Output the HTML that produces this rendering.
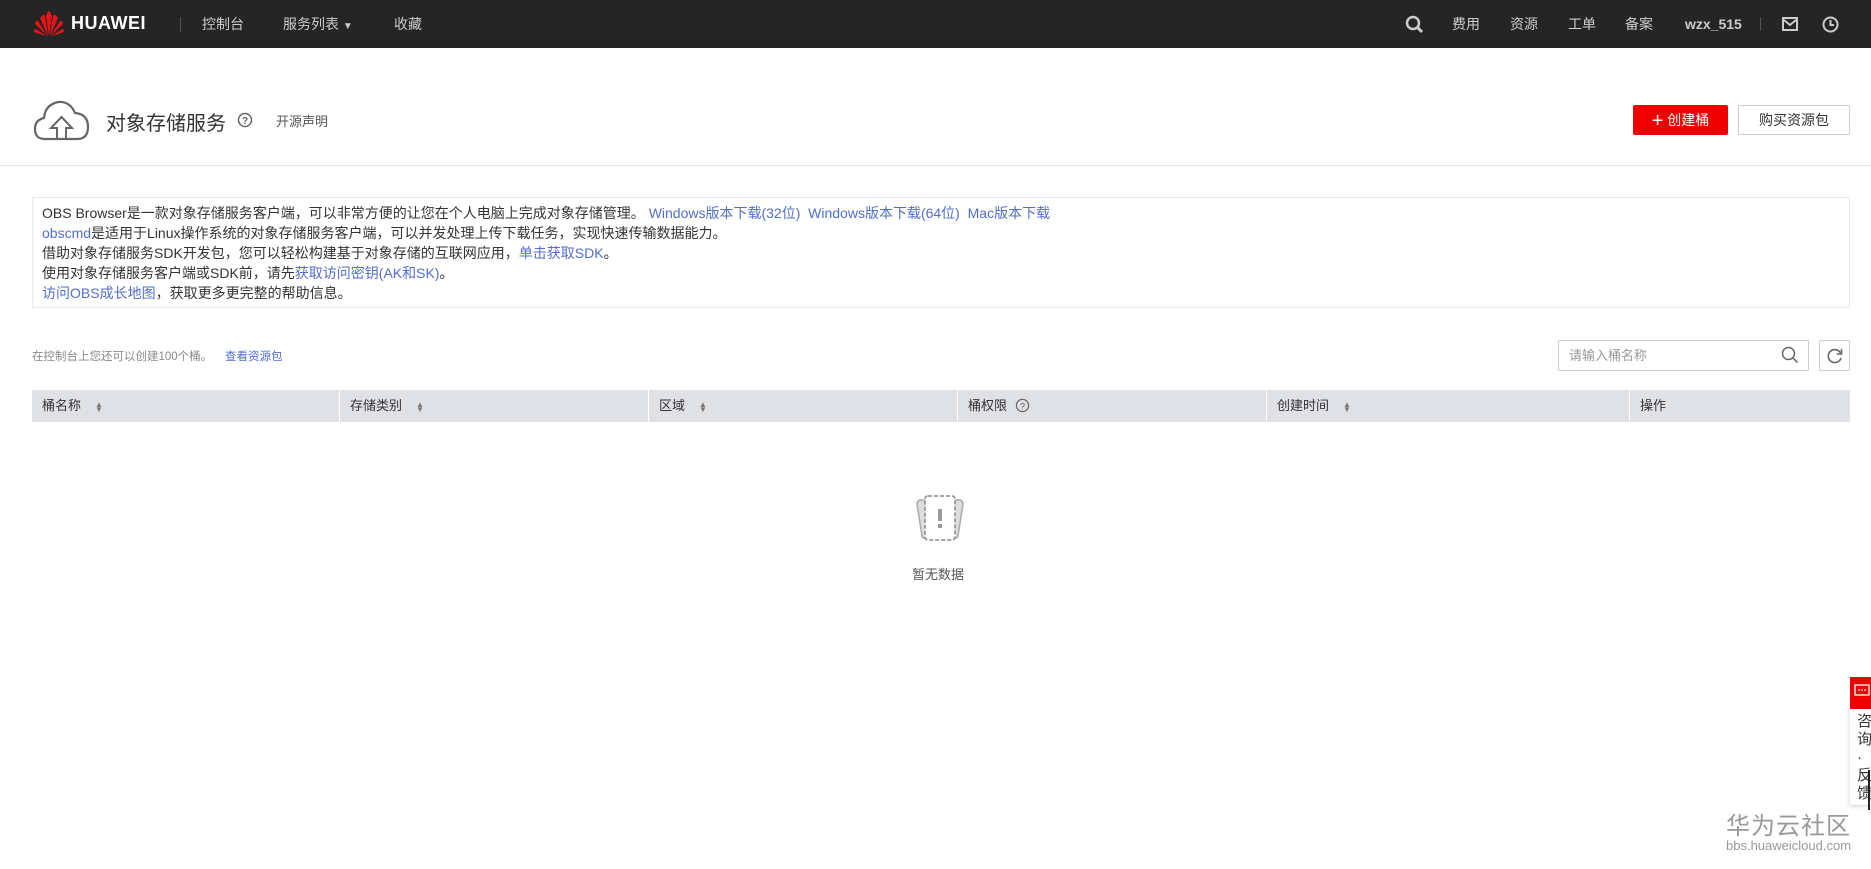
<!DOCTYPE html>
<html><head><meta charset="utf-8">
<style>
*{margin:0;padding:0;box-sizing:border-box}
body{width:1871px;height:869px;background:#fff;font-family:"Liberation Sans","Noto Sans CJK SC",sans-serif;color:#333;position:relative;overflow:hidden}
.abs{position:absolute;white-space:nowrap}
.top{position:absolute;left:0;top:0;width:1871px;height:48px;background:#252525}
.top .t{position:absolute;top:14px;color:#ccc;font-size:14px;line-height:20px}
.link{color:#526ecc}
.info{position:absolute;left:32px;top:197px;width:1818px;height:111px;border:1px solid #e8e8e8}
.info div{position:absolute;left:9px;font-size:14px;line-height:16px;color:#333;white-space:nowrap}
.th{position:absolute;top:390px;height:32px;background:#dfe1e6;font-size:13px;line-height:32px;color:#333;padding-left:10px}
.sort{display:inline-block;margin-left:14px;color:#777;font-size:8px;line-height:5px;vertical-align:middle}
</style></head><body>
<div class="top">
  <svg class="abs" style="left:33px;top:10px" width="32" height="28" viewBox="0 0 32 28">
    <g fill="#e4141b">
      <path d="M16 26 L13 6 Q15 1 16 1 Q17 1 19 6 Z"/>
      <path d="M15 26 L7 8 Q10 4 11.5 5 Q13 10 15 26Z"/>
      <path d="M17 26 L25 8 Q22 4 20.5 5 Q19 10 17 26Z"/>
      <path d="M14.5 26 L2 14 Q3 10 5 11 Z"/>
      <path d="M17.5 26 L30 14 Q29 10 27 11 Z"/>
      <path d="M14 26.5 L1 22 Q1 19 3 19 Z"/>
      <path d="M18 26.5 L31 22 Q31 19 29 19 Z"/>
    </g>
  </svg>
  <div class="abs" style="left:71px;top:13px;color:#fff;font-weight:bold;font-size:18px;letter-spacing:0.5px">HUAWEI</div>
  <div class="abs" style="left:180px;top:17px;width:1px;height:15px;background:#555"></div>
  <div class="t" style="left:202px">控制台</div>
  <div class="t" style="left:283px">服务列表 <span style="font-size:10px">▼</span></div>
  <div class="t" style="left:394px">收藏</div>
  <svg class="abs" style="left:1405px;top:15px" width="19" height="19" viewBox="0 0 19 19"><circle cx="8" cy="8" r="6" fill="none" stroke="#ccc" stroke-width="2.5"/><path d="M12 12 L17 17" stroke="#ccc" stroke-width="3"/></svg>
  <div class="t" style="left:1452px">费用</div>
  <div class="t" style="left:1510px">资源</div>
  <div class="t" style="left:1568px">工单</div>
  <div class="t" style="left:1625px">备案</div>
  <div class="t" style="left:1685px;font-weight:bold">wzx_515</div>
  <div class="abs" style="left:1760px;top:17px;width:1px;height:14px;background:#555"></div>
  <svg class="abs" style="left:1782px;top:17px" width="16" height="14" viewBox="0 0 16 14"><rect x="1" y="1" width="14" height="12" fill="none" stroke="#ccc" stroke-width="2"/><path d="M2 3 L8 8 L14 3" fill="none" stroke="#ccc" stroke-width="2"/></svg>
  <svg class="abs" style="left:1822px;top:16px" width="17" height="17" viewBox="0 0 17 17"><circle cx="8.5" cy="8.5" r="7" fill="none" stroke="#ccc" stroke-width="2"/><path d="M8.5 4 V9 H12" fill="none" stroke="#ccc" stroke-width="2"/></svg>
</div>

<svg class="abs" style="left:33px;top:99px" width="57" height="42" viewBox="0 0 57 42">
  <path d="M12 40 Q2 40 2 30 Q2 21 11 19 Q12 6 25 3 Q37 2 42 14 Q55 15 55 28 Q55 40 44 40 Z" fill="none" stroke="#666" stroke-width="2.2"/>
  <path d="M24 41 V29 H18 L28.5 18 L39 29 H33 V41" fill="none" stroke="#666" stroke-width="2"/>
</svg>
<div class="abs" style="left:106px;top:107px;font-size:20px;color:#333">对象存储服务</div>
<svg class="abs" style="left:237px;top:112px" width="16" height="16" viewBox="0 0 16 16"><circle cx="8" cy="8" r="6.5" fill="none" stroke="#666" stroke-width="1.5"/><text x="8" y="12" font-size="10" text-anchor="middle" fill="#666" font-family="Liberation Sans" font-weight="bold">?</text></svg>
<div class="abs" style="left:276px;top:111px;font-size:13px;color:#555">开源声明</div>

<div class="abs" style="left:1633px;top:105px;width:95px;height:30px;background:#e00;border-radius:2px;color:#fff;font-size:14px;line-height:30px;text-align:center"><span style="font-size:20px;vertical-align:-2px">+</span> 创建桶</div>
<div class="abs" style="left:1738px;top:105px;width:112px;height:30px;border:1px solid #ccc;border-radius:2px;font-size:14px;line-height:28px;text-align:center;color:#333">购买资源包</div>
<div class="abs" style="left:0;top:165px;width:1871px;height:1px;background:#e5e5e5"></div>

<div class="info">
  <div style="top:7px">OBS Browser是一款对象存储服务客户端，可以非常方便的让您在个人电脑上完成对象存储管理。 <span class="link">Windows版本下载(32位)&nbsp; Windows版本下载(64位)&nbsp; Mac版本下载</span></div>
  <div style="top:27px"><span class="link">obscmd</span>是适用于Linux操作系统的对象存储服务客户端，可以并发处理上传下载任务，实现快速传输数据能力。</div>
  <div style="top:47px">借助对象存储服务SDK开发包，您可以轻松构建基于对象存储的互联网应用，<span class="link">单击获取SDK</span>。</div>
  <div style="top:67px">使用对象存储服务客户端或SDK前，请先<span class="link">获取访问密钥(AK和SK)</span>。</div>
  <div style="top:87px"><span class="link">访问OBS成长地图</span>，获取更多更完整的帮助信息。</div>
</div>

<div class="abs" style="left:32px;top:348px;font-size:11.5px;color:#888">在控制台上您还可以创建100个桶。 &nbsp;&nbsp;&nbsp;<span class="link">查看资源包</span></div>
<div class="abs" style="left:1558px;top:340px;width:251px;height:31px;border:1px solid #ccc;border-radius:2px;font-size:13px;line-height:29px;padding-left:10px;color:#999">请输入桶名称</div>
<svg class="abs" style="left:1781px;top:346px" width="18" height="18" viewBox="0 0 18 18"><circle cx="7.5" cy="7.5" r="6" fill="none" stroke="#666" stroke-width="1.5"/><path d="M12 12 L16.5 16.5" stroke="#666" stroke-width="1.5"/></svg>
<div class="abs" style="left:1819px;top:340px;width:31px;height:31px;border:1px solid #ccc;border-radius:2px"></div>
<svg class="abs" style="left:1826px;top:347px" width="18" height="18" viewBox="0 0 18 18"><path d="M14.5 6 A6.5 6.5 0 1 0 15 11" fill="none" stroke="#666" stroke-width="1.6"/><path d="M15.5 2 V7 H10.5" fill="none" stroke="#666" stroke-width="1.6"/></svg>

<div class="th" style="left:32px;width:307px">桶名称<span class="sort">▲<br>▼</span></div>
<div class="th" style="left:340px;width:308px">存储类别<span class="sort">▲<br>▼</span></div>
<div class="th" style="left:649px;width:308px">区域<span class="sort">▲<br>▼</span></div>
<div class="th" style="left:958px;width:308px">桶权限 <svg width="15" height="15" viewBox="0 0 16 16" style="vertical-align:-3px;margin-left:4px"><circle cx="8" cy="8" r="6.5" fill="none" stroke="#666" stroke-width="1.3"/><text x="8" y="12" font-size="10" text-anchor="middle" fill="#666" font-family="Liberation Sans">?</text></svg></div>
<div class="th" style="left:1267px;width:362px">创建时间<span class="sort">▲<br>▼</span></div>
<div class="th" style="left:1630px;width:220px">操作</div>

<svg class="abs" style="left:913px;top:492px" width="54" height="52" viewBox="0 0 54 52">
  <path d="M7 8 Q4 9 4 12 L9 44 Q9 46 12 46 L14 46 L14 8 Z" fill="#ddd" stroke="#aaa" stroke-width="1.5"/>
  <path d="M47 8 Q50 9 50 12 L45 44 Q45 46 42 46 L40 46 L40 8 Z" fill="#ddd" stroke="#aaa" stroke-width="1.5"/>
  <rect x="12" y="4" width="30" height="44" rx="3" fill="#fff" stroke="#999" stroke-width="1.8" stroke-dasharray="4 2"/>
  <rect x="25" y="17" width="4" height="12" fill="#999"/><rect x="25" y="32" width="4" height="4" fill="#999"/>
</svg>
<div class="abs" style="left:912px;top:564px;font-size:13px;color:#555">暂无数据</div>

<div class="abs" style="left:1850px;top:677px;width:21px;height:32px;background:#e00"></div>
<svg class="abs" style="left:1854px;top:684px" width="17" height="16" viewBox="0 0 17 16"><rect x="1" y="1" width="14" height="10" fill="none" stroke="#fff" stroke-width="1.3"/><circle cx="5" cy="6" r="0.9" fill="#fff"/><circle cx="8" cy="6" r="0.9" fill="#fff"/><circle cx="11" cy="6" r="0.9" fill="#fff"/></svg>
<div class="abs" style="left:1850px;top:709px;width:21px;height:96px;background:#fff;box-shadow:0 1px 4px rgba(0,0,0,.2)"></div>
<div class="abs" style="left:1857px;top:713px;font-size:15px;line-height:18px;color:#333;white-space:normal;width:16px">咨询·反馈</div>
<div class="abs" style="left:1868px;top:770px;width:2px;height:40px;background:#222"></div>

<div class="abs" style="left:1726px;top:806px;font-size:24px;color:#999;letter-spacing:1px">华为云社区</div>
<div class="abs" style="left:1726px;top:838px;font-size:13px;color:#999">bbs.huaweicloud.com</div>
</body></html>
